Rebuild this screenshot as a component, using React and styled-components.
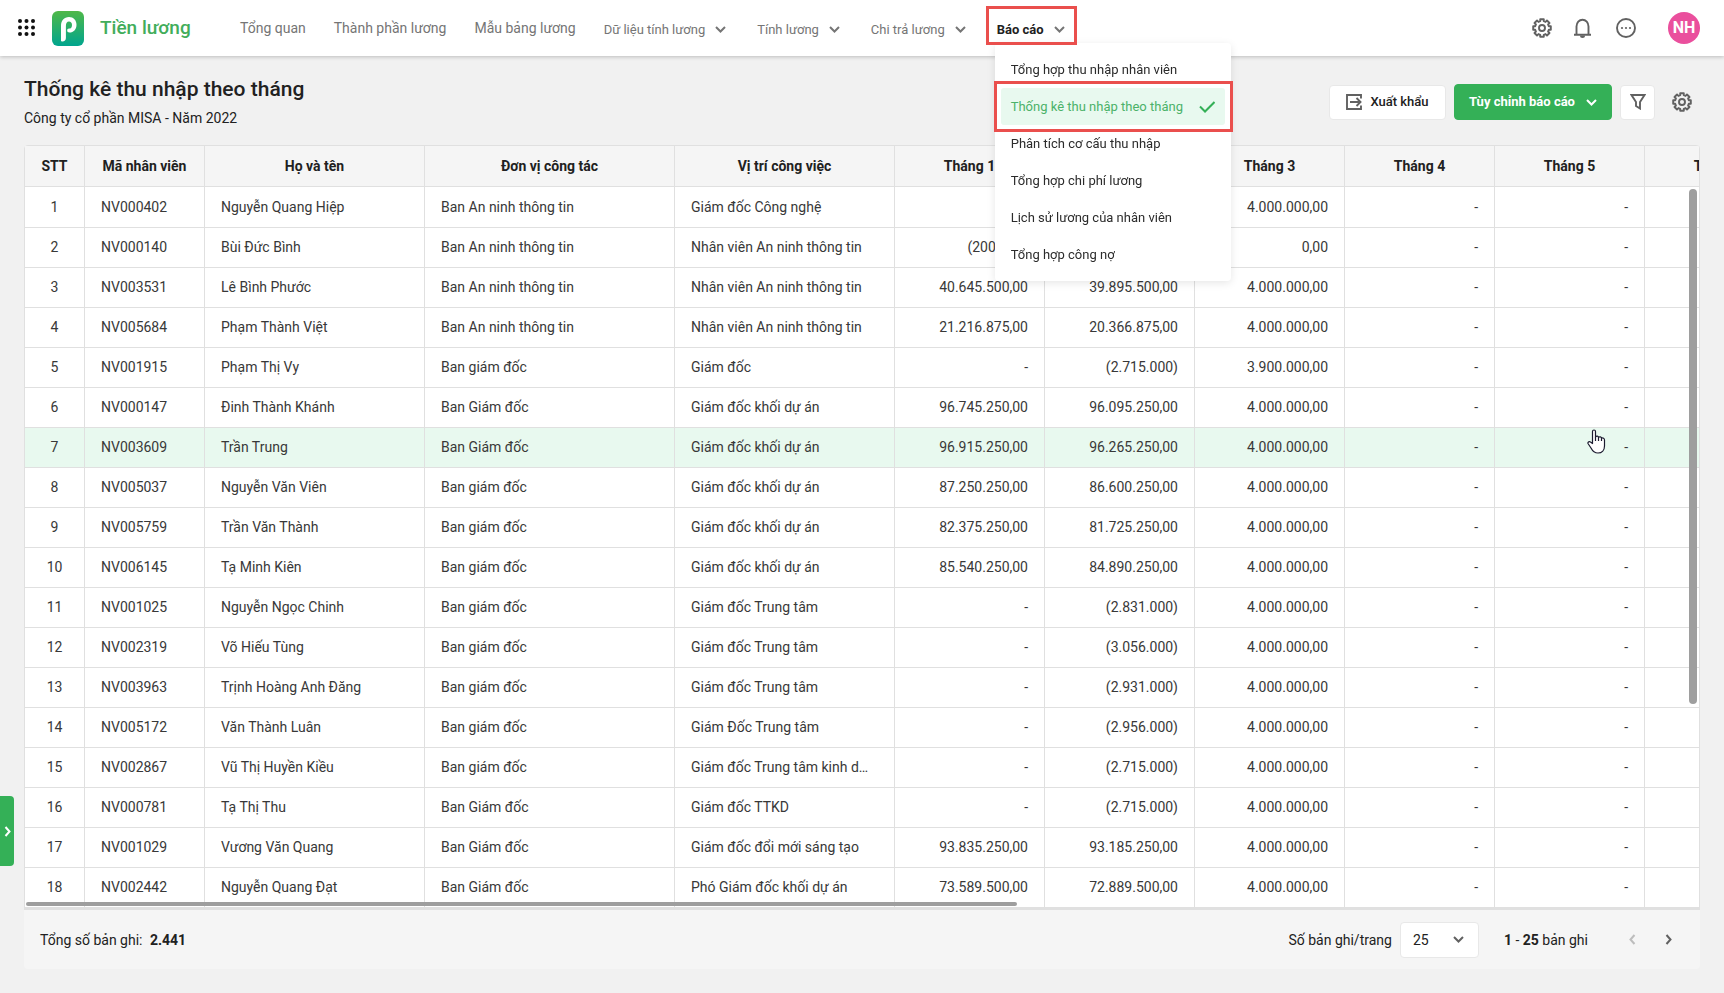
import React from "react";
import styled, { createGlobalStyle, css } from "styled-components";

const GlobalStyle = createGlobalStyle`
  *, *::before, *::after { box-sizing: border-box; }
  body {
    margin: 0;
    background: #f1f1f1;
    color: #212121;
    font: 14px/20px Roboto, "Liberation Sans", sans-serif;
  }
  button, select { font: inherit; color: inherit; }
  button { background: none; border: 0; padding: 0; cursor: pointer; }
`;

const GREEN = "#34b057";
const LINE = "#e0e0e0";

const Page = styled.div`
  display: flex;
  flex-direction: column;
  height: 100vh;
  min-height: 480px;
  overflow: hidden;
`;

const Header = styled.header`
  position: relative;
  z-index: 2;
  display: flex;
  align-items: center;
  flex: none;
  height: 56px;
  padding: 0 24px 0 18px;
  background: #fff;
  box-shadow: 0 1px 4px rgba(0, 0, 0, 0.22);
`;

const IconButton = styled.button`
  display: flex;
  flex: none;
  align-items: center;
  justify-content: center;
  width: ${(p) => p.$size || 20}px;
  height: ${(p) => p.$size || 20}px;
  color: ${(p) => p.$color || "#616161"};
`;

const Brand = styled.a`
  display: flex;
  align-items: center;
  gap: 16px;
  width: 172px;
  margin: 0 16px;
  color: #42ad5b;
  font-size: 19px;
  font-weight: 500;
  text-decoration: none;
  white-space: nowrap;
`;

const Nav = styled.nav`
  display: flex;
  flex: 1;
  gap: 28px;
  height: 100%;
  color: #757575;
`;

const navText = css`
  display: flex;
  align-items: center;
  height: 56px;
  white-space: nowrap;
`;

const NavLink = styled.a`
  ${navText}
  color: inherit;
  text-decoration: none;
`;

const NavGroup = styled.div`
  position: relative;
`;

const NavButton = styled.button`
  ${navText}
  gap: 10px;
  padding: 3px 3px 0 0;
  color: ${(p) => (p.$active ? "#212121" : "inherit")};
  font-size: 13px;
  font-weight: ${(p) => (p.$active ? 700 : 400)};
  svg { color: #757575; }
`;

const Marker = styled.span`
  position: absolute;
  z-index: 3;
  inset: ${(p) => p.$inset};
  border: 3px solid #ea4f4d;
  pointer-events: none;
`;

const Menu = styled.ul`
  position: absolute;
  top: 43px;
  left: -2px;
  width: 236px;
  margin: 0;
  padding: 8px 6px;
  list-style: none;
  background: #fff;
  border-radius: 4px;
  box-shadow: 0 2px 8px rgba(0, 0, 0, 0.1);
`;

const MenuItem = styled.li`
  position: relative;
`;

const MenuLink = styled.a`
  display: flex;
  align-items: center;
  justify-content: space-between;
  height: 37px;
  padding: 0 10px;
  border-radius: 3px;
  background: ${(p) => (p.$selected ? "#e8f9ef" : "transparent")};
  color: ${(p) => (p.$selected ? "#4bb269" : "#2b2b2b")};
  font-size: 13px;
  text-decoration: none;
  white-space: nowrap;
`;

const Tools = styled.div`
  display: flex;
  align-items: center;
  gap: 22px;
`;

const Avatar = styled.button`
  width: 32px;
  height: 32px;
  margin-left: 10px;
  border-radius: 50%;
  background: #ea4f9d;
  color: #fff;
  font-size: 16px;
  font-weight: 700;
`;

const Main = styled.main`
  display: flex;
  flex: 1;
  flex-direction: column;
  min-height: 0;
  padding: 20px 24px 24px;
`;

const TitleBar = styled.div`
  display: flex;
  justify-content: space-between;
  flex: none;
  height: 69px;
`;

const Title = styled.h1`
  margin: 0;
  font-size: 21px;
  font-weight: 500;
  line-height: 26px;
`;

const Subtitle = styled.p`
  margin: 6px 0 0;
  line-height: 20px;
`;

const Actions = styled.div`
  display: flex;
  align-items: center;
  gap: 8px;
  height: 36px;
  margin: 8px 8px 0 0;
`;

const Button = styled.button`
  display: flex;
  align-items: center;
  justify-content: center;
  gap: ${(p) => p.$gap || 8}px;
  width: ${(p) => p.$width}px;
  height: ${(p) => (p.$primary ? 36 : 35)}px;
  border: 1px solid ${(p) => (p.$primary ? GREEN : "#e8e8e8")};
  border-radius: 4px;
  background: ${(p) => (p.$primary ? GREEN : "#fff")};
  color: ${(p) => (p.$primary ? "#fff" : "#212121")};
  font-size: 13px;
  font-weight: ${(p) => (p.$primary ? 700 : 500)};
  white-space: nowrap;
`;

const SettingsSlot = styled.div`
  margin-left: 9px;
`;

const GridFrame = styled.section`
  position: relative;
  flex: 1;
  min-height: 0;
  overflow: hidden;
  border-right: 1px solid ${LINE};
  border-radius: 4px 4px 0 0;
  background: #fff;
`;

const GridScroll = styled.div`
  height: 100%;
  overflow: auto;
  scrollbar-width: none;
`;

const Table = styled.table`
  width: 1771px;
  table-layout: fixed;
  border-collapse: separate;
  border-spacing: 0;
  border-left: 1px solid ${LINE};
`;

const HeadCell = styled.th`
  position: sticky;
  top: 0;
  height: 42px;
  padding: 0;
  border: solid ${LINE};
  border-width: 1px 1px 1px 0;
  background: #f5f5f5;
  font-weight: 700;
`;

const Cell = styled.td`
  height: 40px;
  padding: 0 ${(p) => (p.$align ? 16 : 20)}px 1px 16px;
  border: solid ${LINE};
  border-width: 0 1px 1px 0;
  color: #383838;
  text-align: ${(p) => p.$align || "left"};
  overflow: hidden;
  text-overflow: ellipsis;
  white-space: nowrap;
`;

const Row = styled.tr`
  background: ${(p) => (p.$hovered ? "#e8f9ef" : "#fff")};
  &:first-child ${Cell} {
    height: 41px;
    padding-bottom: 0;
  }
`;

const Thumb = styled.span`
  position: absolute;
  border-radius: 4px;
  background: #9e9e9e;
`;

const VerticalThumb = styled(Thumb)`
  top: 44px;
  right: 2px;
  width: 8px;
  height: 515px;
`;

const HorizontalThumb = styled(Thumb)`
  bottom: 1px;
  left: 2px;
  width: 991px;
  height: 4px;
`;

const Footer = styled.footer`
  display: flex;
  align-items: center;
  flex: none;
  height: 62px;
  padding: 0 22px 0 16px;
  border-top: 3px solid ${LINE};
  border-radius: 0 0 4px 4px;
  background: #f5f5f5;
  b { font-weight: 700; }
`;

const Total = styled.span`
  flex: 1;
  b { margin-left: 4px; }
`;

const SizeLabel = styled.label`
  margin-right: 8px;
`;

const SelectBox = styled.div`
  position: relative;
  width: 79px;
  margin-right: 25px;
  svg {
    position: absolute;
    top: 14px;
    right: 15px;
    color: #616161;
    pointer-events: none;
  }
`;

const Select = styled.select`
  display: block;
  width: 100%;
  height: 36px;
  padding: 0 12px;
  appearance: none;
  border: 1px solid #e8e8e8;
  border-radius: 4px;
  background: #fff;
`;

const Pager = styled.div`
  display: flex;
  gap: 16px;
  margin-left: 34px;
`;

const SideTab = styled.button`
  position: fixed;
  bottom: 127px;
  left: 0;
  display: flex;
  align-items: center;
  justify-content: center;
  width: 14px;
  height: 70px;
  border-radius: 0 4px 4px 0;
  background: ${GREEN};
  color: #fff;
`;

const Pointer = styled.svg`
  position: fixed;
  top: 429px;
  left: 1587px;
  pointer-events: none;
`;

const CHEVRONS = {
  down: { box: "0 0 11 7", points: "1,1 5.5,5.5 10,1" },
  left: { box: "0 0 7 11", points: "5.5,1 1.5,5.5 5.5,10" },
  right: { box: "0 0 7 11", points: "1.5,1 5.5,5.5 1.5,10" },
};

function Chevron({ dir = "down" }) {
  const { box, points } = CHEVRONS[dir];
  const [, , w, h] = box.split(" ");
  return (
    <svg width={w} height={h} viewBox={box} fill="none" stroke="currentColor" strokeWidth="2" aria-hidden="true">
      <polyline points={points} />
    </svg>
  );
}

function AppsIcon() {
  return (
    <svg width="18" height="18" viewBox="0 0 18 18" aria-hidden="true">
      {[2, 8.5, 15].map((y) => [2, 8.5, 15].map((x) => <circle key={x + "-" + y} cx={x} cy={y} r="2" fill="#111" />))}
    </svg>
  );
}

function Logo() {
  return (
    <svg width="32" height="35" viewBox="0 0 32 35" aria-hidden="true">
      <defs>
        <linearGradient id="logo" x1="0" y1="0" x2="0" y2="1">
          <stop offset="0" stopColor="#4fb848" />
          <stop offset="1" stopColor="#00a58e" />
        </linearGradient>
      </defs>
      <rect width="32" height="35" rx="6" fill="url(#logo)" />
      <path d="M9 29.500V15C9 9.500 12 6 17 6C21.500 6 24.500 9.300 24.500 13.700C24.500 18.500 21.500 21.500 17.500 21.500C15.800 21.500 15.200 20.500 15.200 19.500C15.200 18.300 16 17.600 17 17.600C19 17.600 20 16 20 13.900C20 11.800 18.800 10.500 17 10.500C14.900 10.500 13.900 12 13.900 15V27C13.900 29 12.500 30.500 10.500 30.500C9.500 30.500 9 30.200 9 29.500Z" fill="#fff" />
    </svg>
  );
}

const GEAR_PATH = (() => {
  const points = [];
  for (let i = 0; i < 8; i += 1) {
    const mid = (i * Math.PI) / 4;
    [[-0.26, 7], [-0.2, 9], [0.2, 9], [0.26, 7]].forEach(([turn, r]) => {
      points.push(`${(10 + r * Math.sin(mid + turn)).toFixed(2)} ${(10 - r * Math.cos(mid + turn)).toFixed(2)}`);
    });
  }
  return `M${points.join("L")}Z`;
})();

function Gear() {
  return (
    <svg width="20" height="20" viewBox="0 0 20 20" fill="none" stroke="currentColor" strokeWidth="1.900" strokeLinejoin="round" aria-hidden="true">
      <path d={GEAR_PATH} />
      <circle cx="10" cy="10" r="3" />
    </svg>
  );
}

function Bell() {
  return (
    <svg width="20" height="20" viewBox="0 0 20 20" fill="none" stroke="currentColor" strokeWidth="1.900" strokeLinejoin="round" aria-hidden="true">
      <path d="M0 16.800H17M2.500 16.500V8.500A6 6.800 0 0 1 14.500 8.500V16.500" />
      <path d="M6 17.500A2.500 2.500 0 0 0 11 17.500Z" fill="currentColor" stroke="none" />
    </svg>
  );
}

function More() {
  return (
    <svg width="20" height="20" viewBox="0 0 20 20" aria-hidden="true">
      <circle cx="10" cy="10" r="9" fill="none" stroke="currentColor" strokeWidth="1.900" />
      {[6, 10, 14].map((x) => <circle key={x} cx={x} cy="10" r="1.100" fill="currentColor" />)}
    </svg>
  );
}

function Export() {
  return (
    <svg width="16" height="16" viewBox="0 0 16 16" fill="none" stroke="#616161" strokeWidth="1.900" aria-hidden="true">
      <path d="M15 4.500V1H1V15H15V11.500M4 8H14M10.500 4L14.500 8L10.500 12" />
    </svg>
  );
}

function Funnel() {
  return (
    <svg width="16" height="16" viewBox="0 0 16 16" fill="none" stroke="#616161" strokeWidth="1.900" aria-hidden="true">
      <path d="M1.500 1H14.500L10 8V14.500L6 12V8Z" />
    </svg>
  );
}

function Check() {
  return (
    <svg width="16" height="12" viewBox="0 0 16 12" fill="none" stroke="#34b057" strokeWidth="2" aria-hidden="true">
      <path d="M1 5.500L6 10.500L15.500 1" />
    </svg>
  );
}

const LINKS = ["Tổng quan", "Thành phần lương", "Mẫu bảng lương"];
const GROUPS = ["Dữ liệu tính lương", "Tính lương", "Chi trả lương"];
const REPORTS = [
  "Tổng hợp thu nhập nhân viên",
  "Thống kê thu nhập theo tháng",
  "Phân tích cơ cấu thu nhập",
  "Tổng hợp chi phí lương",
  "Lịch sử lương của nhân viên",
  "Tổng hợp công nợ",
];

const COLUMNS = [
  ["STT", 60], ["Mã nhân viên", 120], ["Họ và tên", 220], ["Đơn vị công tác", 250], ["Vị trí công việc", 220],
  ["Tháng 1", 150], ["Tháng 2", 150], ["Tháng 3", 150], ["Tháng 4", 150], ["Tháng 5", 150], ["Tháng 6", 150],
];

const ROWS = [
  ["NV000402", "Nguyễn Quang Hiệp", "Ban An ninh thông tin", "Giám đốc Công nghệ", "-", "-", "4.000.000,00"],
  ["NV000140", "Bùi Đức Bình", "Ban An ninh thông tin", "Nhân viên An ninh thông tin", "(200.000)", "-", "0,00"],
  ["NV003531", "Lê Bình Phước", "Ban An ninh thông tin", "Nhân viên An ninh thông tin", "40.645.500,00", "39.895.500,00", "4.000.000,00"],
  ["NV005684", "Phạm Thành Việt", "Ban An ninh thông tin", "Nhân viên An ninh thông tin", "21.216.875,00", "20.366.875,00", "4.000.000,00"],
  ["NV001915", "Phạm Thị Vy", "Ban giám đốc", "Giám đốc", "-", "(2.715.000)", "3.900.000,00"],
  ["NV000147", "Đinh Thành Khánh", "Ban Giám đốc", "Giám đốc khối dự án", "96.745.250,00", "96.095.250,00", "4.000.000,00"],
  ["NV003609", "Trần Trung", "Ban Giám đốc", "Giám đốc khối dự án", "96.915.250,00", "96.265.250,00", "4.000.000,00"],
  ["NV005037", "Nguyễn Văn Viên", "Ban giám đốc", "Giám đốc khối dự án", "87.250.250,00", "86.600.250,00", "4.000.000,00"],
  ["NV005759", "Trần Văn Thành", "Ban giám đốc", "Giám đốc khối dự án", "82.375.250,00", "81.725.250,00", "4.000.000,00"],
  ["NV006145", "Tạ Minh Kiên", "Ban giám đốc", "Giám đốc khối dự án", "85.540.250,00", "84.890.250,00", "4.000.000,00"],
  ["NV001025", "Nguyễn Ngọc Chinh", "Ban giám đốc", "Giám đốc Trung tâm", "-", "(2.831.000)", "4.000.000,00"],
  ["NV002319", "Võ Hiếu Tùng", "Ban giám đốc", "Giám đốc Trung tâm", "-", "(3.056.000)", "4.000.000,00"],
  ["NV003963", "Trịnh Hoàng Anh Đăng", "Ban giám đốc", "Giám đốc Trung tâm", "-", "(2.931.000)", "4.000.000,00"],
  ["NV005172", "Văn Thành Luân", "Ban giám đốc", "Giám Đốc Trung tâm", "-", "(2.956.000)", "4.000.000,00"],
  ["NV002867", "Vũ Thị Huyền Kiều", "Ban giám đốc", "Giám đốc Trung tâm kinh doanh", "-", "(2.715.000)", "4.000.000,00"],
  ["NV000781", "Tạ Thị Thu", "Ban Giám đốc", "Giám đốc TTKD", "-", "(2.715.000)", "4.000.000,00"],
  ["NV001029", "Vương Văn Quang", "Ban Giám đốc", "Giám đốc đổi mới sáng tạo", "93.835.250,00", "93.185.250,00", "4.000.000,00"],
  ["NV002442", "Nguyễn Quang Đạt", "Ban Giám đốc", "Phó Giám đốc khối dự án", "73.589.500,00", "72.889.500,00", "4.000.000,00"],
];

function TopBar() {
  return (
    <Header>
      <IconButton $size={18} aria-label="Ứng dụng"><AppsIcon /></IconButton>
      <Brand href="#"><Logo />Tiền lương</Brand>
      <Nav>
        {LINKS.map((text) => <NavLink key={text} href="#">{text}</NavLink>)}
        {GROUPS.map((text) => <NavButton key={text}>{text}<Chevron /></NavButton>)}
        <NavGroup>
          <NavButton $active>Báo cáo<Chevron /></NavButton>
          <Marker $inset="6px -9px 11px -11px" />
          <Menu>
            {REPORTS.map((text, i) => (
              <MenuItem key={text}>
                <MenuLink href="#" $selected={i === 1}>{text}{i === 1 && <Check />}</MenuLink>
                {i === 1 && <Marker $inset="-7px -8px -7px -7px" />}
              </MenuItem>
            ))}
          </Menu>
        </NavGroup>
      </Nav>
      <Tools>
        <IconButton aria-label="Thiết lập"><Gear /></IconButton>
        <IconButton aria-label="Thông báo"><Bell /></IconButton>
        <IconButton aria-label="Thêm"><More /></IconButton>
        <Avatar>NH</Avatar>
      </Tools>
    </Header>
  );
}

function DataGrid() {
  return (
    <GridFrame>
      <GridScroll>
        <Table>
          <colgroup>
            {COLUMNS.map(([name, width]) => <col key={name} width={width} />)}
          </colgroup>
          <thead>
            <tr>{COLUMNS.map(([name]) => <HeadCell key={name} scope="col">{name}</HeadCell>)}</tr>
          </thead>
          <tbody>
            {ROWS.map((row, i) => (
              <Row key={row[0]} $hovered={i === 6}>
                <Cell $align="center">{i + 1}</Cell>
                {[...row, "-", "-", "-"].map((value, j) => (
                  <Cell key={j} $align={j > 3 ? "right" : undefined}>{value}</Cell>
                ))}
              </Row>
            ))}
          </tbody>
        </Table>
      </GridScroll>
      <VerticalThumb />
      <HorizontalThumb />
    </GridFrame>
  );
}

export default function App() {
  return (
    <Page>
      <GlobalStyle />
      <TopBar />
      <Main>
        <TitleBar>
          <div>
            <Title>Thống kê thu nhập theo tháng</Title>
            <Subtitle>Công ty cổ phần MISA - Năm 2022</Subtitle>
          </div>
          <Actions>
            <Button $width={117}><Export />Xuất khẩu</Button>
            <Button $primary $width={158} $gap={11}>Tùy chỉnh báo cáo<Chevron /></Button>
            <Button $width={35} aria-label="Lọc"><Funnel /></Button>
            <SettingsSlot>
              <IconButton aria-label="Tùy chỉnh cột"><Gear /></IconButton>
            </SettingsSlot>
          </Actions>
        </TitleBar>
        <DataGrid />
        <Footer>
          <Total>Tổng số bản ghi: <b>2.441</b></Total>
          <SizeLabel htmlFor="page-size">Số bản ghi/trang</SizeLabel>
          <SelectBox>
            <Select id="page-size" defaultValue="25">
              <option>25</option>
              <option>50</option>
              <option>100</option>
            </Select>
            <Chevron />
          </SelectBox>
          <span><b>1</b> - <b>25</b> bản ghi</span>
          <Pager>
            <IconButton $color="#bdbdbd" aria-label="Trang trước"><Chevron dir="left" /></IconButton>
            <IconButton aria-label="Trang sau"><Chevron dir="right" /></IconButton>
          </Pager>
        </Footer>
      </Main>
      <SideTab aria-label="Mở rộng"><Chevron dir="right" /></SideTab>
      <Pointer width="20" height="26" viewBox="0 0 20 26" fill="#fff" stroke="#1a1a2e" strokeWidth="1.200" strokeLinejoin="round" aria-hidden="true">
        <path d="M5.500 14.500V2.500C5.500 0.500 8.500 0.500 8.500 2.500V8C9.500 6.500 11.500 7 11.500 8.500C12.500 7.200 14.500 7.800 14.500 9.300C16 8.500 17.500 9.300 17.500 11V17C17.500 21 15 24 11 24C7.500 24 5.500 22 4 19L1 14.500C0.500 13 2.500 12.200 3.500 13Z" />
        <path d="M8.500 8V12M11.500 8.500V12M14.500 9.300V12" fill="none" />
      </Pointer>
    </Page>
  );
}
